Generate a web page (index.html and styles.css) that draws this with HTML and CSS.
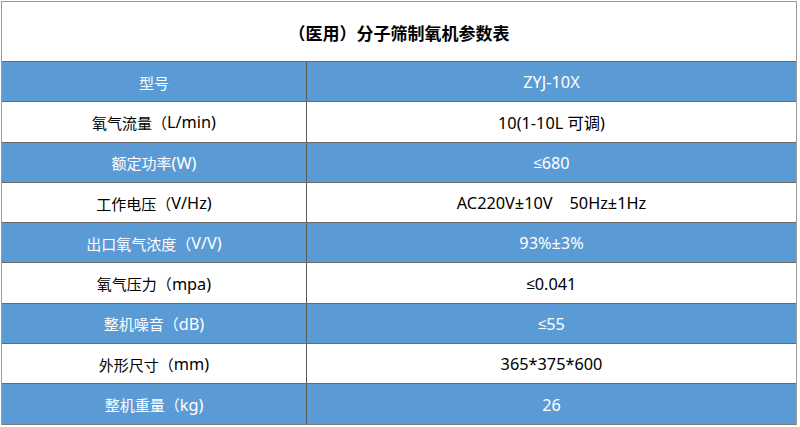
FILE: index.html
```html
<!DOCTYPE html>
<html lang="zh-CN">
<head>
<meta charset="utf-8">
<title>（医用）分子筛制氧机参数表</title>
<link rel="stylesheet" href="styles.css">
</head>
<body>
<div class="sheet">
  <div class="title">（医用）分子筛制氧机参数表</div>
  <div class="row blue"><div class="cell key">型号</div><div class="cell val">ZYJ-10X</div></div>
  <div class="row"><div class="cell key">氧气流量（<span class="lat">L/min)</span></div><div class="cell val">10(1-10L 可调)</div></div>
  <div class="row blue"><div class="cell key">额定功率<span class="lat">(W)</span></div><div class="cell val"><span class="sym">≤</span>680</div></div>
  <div class="row"><div class="cell key">工作电压（<span class="lat">V/Hz)</span></div><div class="cell val">AC220V±10V&nbsp;&nbsp;&nbsp;&nbsp;50Hz±1Hz</div></div>
  <div class="row blue"><div class="cell key">出口氧气浓度（<span class="lat">V/V)</span></div><div class="cell val">93%±3%</div></div>
  <div class="row"><div class="cell key">氧气压力（<span class="lat">mpa)</span></div><div class="cell val"><span class="sym">≤</span>0.041</div></div>
  <div class="row blue"><div class="cell key">整机噪音（<span class="lat">dB)</span></div><div class="cell val"><span class="sym">≤</span>55</div></div>
  <div class="row"><div class="cell key">外形尺寸（<span class="lat">mm)</span></div><div class="cell val">365*375*600</div></div>
  <div class="row blue last"><div class="cell key">整机重量（<span class="lat">kg)</span></div><div class="cell val">26</div></div>
</div>
</body>
</html>
```
FILE: styles.css
```css
html, body {
  margin: 0;
  padding: 0;
  background: #ffffff;
}
body {
  font-family: "Noto Sans", "Noto Sans CJK SC", "DejaVu Sans", sans-serif;
  color: #000000;
}
.sheet {
  margin: 1px 0 0 1px;
  width: 796px;
  box-sizing: border-box;
  border: 1px solid #9a9a9a;
  border-bottom: none;
}
.title {
  height: 60px;
  box-sizing: border-box;
  border-bottom: 1px solid #6a6a6a;
  display: flex;
  align-items: center;
  justify-content: center;
  font-size: 17px;
  font-weight: bold;
  padding-top: 2px;
}
.row {
  display: grid;
  grid-template-columns: 305px 1fr;
  height: 40.3px;
  box-sizing: border-box;
  border-bottom: 1px solid #6a6a6a;
}
.row.last {
  border-bottom: 1px solid #7a7a7a;
}
.row.blue {
  background: #5b9bd5;
  color: #ffffff;
}
.cell {
  display: flex;
  align-items: center;
  justify-content: center;
  font-size: 15px;
  padding-top: 1px;
  white-space: pre;
}
.val {
  font-size: 16.3px;
}
.lat {
  font-size: 16.3px;
}
.sym {
  font-family: "Liberation Sans", "DejaVu Sans", sans-serif;
  font-size: 15px;
}
.key {
  border-right: 1px solid #5a5a5a;
}
```
